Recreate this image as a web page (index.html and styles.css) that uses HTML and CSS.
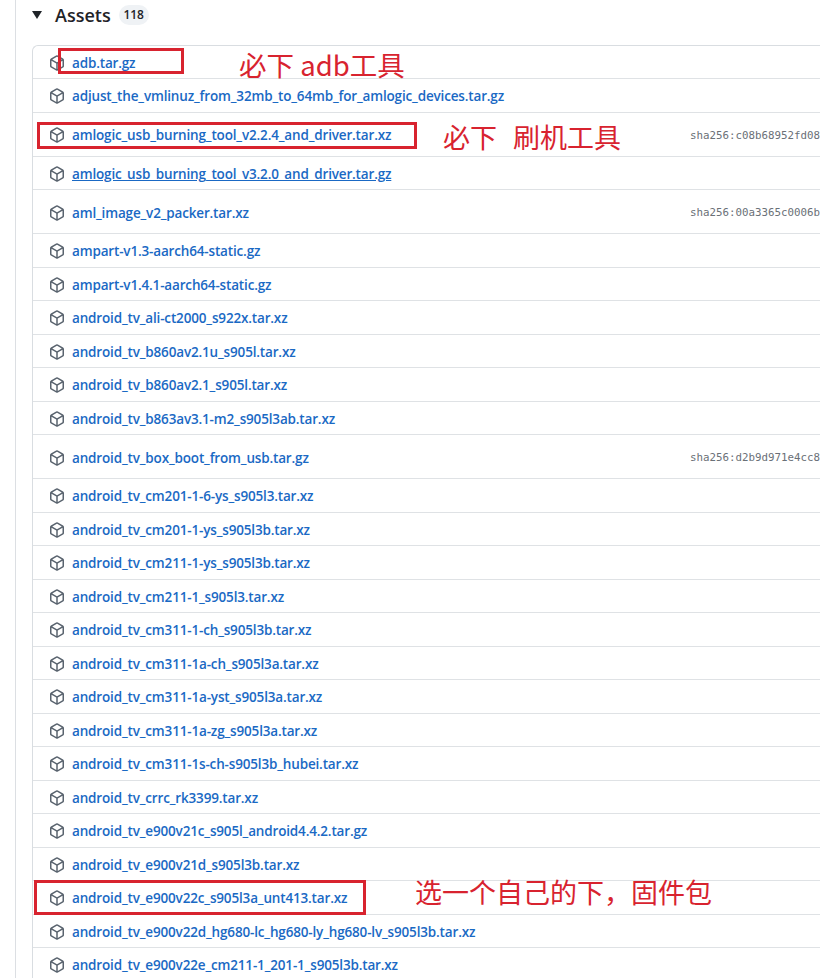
FILE: index.html
```html
<!DOCTYPE html>
<html lang="zh">
<head>
<meta charset="utf-8">
<title>Assets</title>
<link rel="stylesheet" href="styles.css">
</head>
<body>
<svg class="defs" width="0" height="0" aria-hidden="true">
  <symbol id="pkg" viewBox="0 0 16 16">
    <path d="m8.878.392 5.25 3.045c.54.314.872.89.872 1.514v6.098a1.75 1.75 0 0 1-.872 1.514l-5.25 3.045a1.75 1.75 0 0 1-1.756 0l-5.25-3.045A1.75 1.75 0 0 1 1 11.049V4.951c0-.624.332-1.201.872-1.514L7.122.392a1.75 1.75 0 0 1 1.756 0ZM7.875 1.69l-4.63 2.685L8 7.133l4.755-2.758-4.63-2.685a.248.248 0 0 0-.25 0ZM2.5 5.677v5.372c0 .09.047.171.125.216l4.625 2.683V8.432Zm6.25 8.271 4.625-2.683a.25.25 0 0 0 .125-.216V5.677L8.75 8.432Z"/>
  </symbol>
</svg>
<div class="page">
  <main class="release">
    <div class="summary">
      <span class="caret"></span>
      <h2 class="title">Assets</h2>
      <span class="count">118</span>
    </div>
    <ul class="assets">
      <li class="row"><svg class="icon"><use href="#pkg"/></svg><a class="link">adb.tar.gz</a></li>
      <li class="row"><svg class="icon"><use href="#pkg"/></svg><a class="link">adjust_the_vmlinuz_from_32mb_to_64mb_for_amlogic_devices.tar.gz</a></li>
      <li class="row tall"><svg class="icon"><use href="#pkg"/></svg><a class="link">amlogic_usb_burning_tool_v2.2.4_and_driver.tar.xz</a><code class="sha">sha256:c08b68952fd08</code></li>
      <li class="row"><svg class="icon"><use href="#pkg"/></svg><a class="link hovered">amlogic_usb_burning_tool_v3.2.0_and_driver.tar.gz</a></li>
      <li class="row tall"><svg class="icon"><use href="#pkg"/></svg><a class="link">aml_image_v2_packer.tar.xz</a><code class="sha">sha256:00a3365c0006b</code></li>
      <li class="row"><svg class="icon"><use href="#pkg"/></svg><a class="link">ampart-v1.3-aarch64-static.gz</a></li>
      <li class="row"><svg class="icon"><use href="#pkg"/></svg><a class="link">ampart-v1.4.1-aarch64-static.gz</a></li>
      <li class="row"><svg class="icon"><use href="#pkg"/></svg><a class="link">android_tv_ali-ct2000_s922x.tar.xz</a></li>
      <li class="row"><svg class="icon"><use href="#pkg"/></svg><a class="link">android_tv_b860av2.1u_s905l.tar.xz</a></li>
      <li class="row"><svg class="icon"><use href="#pkg"/></svg><a class="link">android_tv_b860av2.1_s905l.tar.xz</a></li>
      <li class="row"><svg class="icon"><use href="#pkg"/></svg><a class="link">android_tv_b863av3.1-m2_s905l3ab.tar.xz</a></li>
      <li class="row tall"><svg class="icon"><use href="#pkg"/></svg><a class="link">android_tv_box_boot_from_usb.tar.gz</a><code class="sha">sha256:d2b9d971e4cc8</code></li>
      <li class="row"><svg class="icon"><use href="#pkg"/></svg><a class="link">android_tv_cm201-1-6-ys_s905l3.tar.xz</a></li>
      <li class="row"><svg class="icon"><use href="#pkg"/></svg><a class="link">android_tv_cm201-1-ys_s905l3b.tar.xz</a></li>
      <li class="row"><svg class="icon"><use href="#pkg"/></svg><a class="link">android_tv_cm211-1-ys_s905l3b.tar.xz</a></li>
      <li class="row"><svg class="icon"><use href="#pkg"/></svg><a class="link">android_tv_cm211-1_s905l3.tar.xz</a></li>
      <li class="row"><svg class="icon"><use href="#pkg"/></svg><a class="link">android_tv_cm311-1-ch_s905l3b.tar.xz</a></li>
      <li class="row"><svg class="icon"><use href="#pkg"/></svg><a class="link">android_tv_cm311-1a-ch_s905l3a.tar.xz</a></li>
      <li class="row"><svg class="icon"><use href="#pkg"/></svg><a class="link">android_tv_cm311-1a-yst_s905l3a.tar.xz</a></li>
      <li class="row"><svg class="icon"><use href="#pkg"/></svg><a class="link">android_tv_cm311-1a-zg_s905l3a.tar.xz</a></li>
      <li class="row"><svg class="icon"><use href="#pkg"/></svg><a class="link">android_tv_cm311-1s-ch-s905l3b_hubei.tar.xz</a></li>
      <li class="row"><svg class="icon"><use href="#pkg"/></svg><a class="link">android_tv_crrc_rk3399.tar.xz</a></li>
      <li class="row"><svg class="icon"><use href="#pkg"/></svg><a class="link">android_tv_e900v21c_s905l_android4.4.2.tar.gz</a></li>
      <li class="row"><svg class="icon"><use href="#pkg"/></svg><a class="link">android_tv_e900v21d_s905l3b.tar.xz</a></li>
      <li class="row"><svg class="icon"><use href="#pkg"/></svg><a class="link">android_tv_e900v22c_s905l3a_unt413.tar.xz</a></li>
      <li class="row"><svg class="icon"><use href="#pkg"/></svg><a class="link">android_tv_e900v22d_hg680-lc_hg680-ly_hg680-lv_s905l3b.tar.xz</a></li>
      <li class="row"><svg class="icon"><use href="#pkg"/></svg><a class="link">android_tv_e900v22e_cm211-1_201-1_s905l3b.tar.xz</a></li>
    </ul>
  </main>
  <div class="mark mark-adb"></div>
  <div class="mark mark-tool"></div>
  <div class="mark mark-fw"></div>
  <div class="note note-adb">必下 adb工具</div>
  <div class="note note-tool">必下&nbsp;&nbsp;刷机工具</div>
  <div class="note note-fw">选一个自己的下&#xFF0C;固件包</div>
</div>
</body>
</html>
```

FILE: styles.css
```css
* {
  box-sizing: border-box;
}

html,
body {
  margin: 0;
  padding: 0;
  background: #ffffff;
}

.defs {
  position: absolute;
}

.page {
  position: relative;
  width: 820px;
  height: 978px;
  overflow: hidden;
  font-family: "Open Sans", "Noto Sans", "Liberation Sans", sans-serif;
}

.release {
  margin-left: 15px;
  height: 978px;
  border-left: 1px solid #dcdfe3;
  padding-left: 16px;
}

.summary {
  display: flex;
  align-items: center;
  height: 45px;
  padding-bottom: 15px;
}

.caret {
  width: 0;
  height: 0;
  margin-right: 13px;
  border-left: 5px solid transparent;
  border-right: 5px solid transparent;
  border-top: 8px solid #1f2328;
}

.title {
  margin: 0 8px 0 0;
  font-size: 18px;
  line-height: 30px;
  font-weight: 600;
  color: #1f2328;
}

.count {
  width: 30px;
  height: 20px;
  border-radius: 10px;
  background: #eff2f5;
  color: #1f2328;
  font-size: 12px;
  line-height: 20px;
  font-weight: 600;
  text-align: center;
}

.assets {
  list-style: none;
  margin: 0;
  padding: 0;
  width: 820px;
  border-left: 1px solid #d9dde1;
  border-top: 1px solid #d9dde1;
  border-top-left-radius: 6px;
}

.row {
  display: flex;
  align-items: center;
  height: 33.5px;
  padding: 2px 0 0 16px;
  border-bottom: 1px solid #dfe2e5;
  white-space: nowrap;
}

.row:first-child {
  height: 33px;
}

.tall {
  height: 44px;
}

.icon {
  width: 16px;
  height: 16px;
  margin-right: 7px;
  flex: none;
  fill: #59636e;
}

.link {
  font-size: 13.5px;
  font-weight: 550;
  letter-spacing: -0.16px;
  color: #1a69c4;
}

.hovered {
  text-decoration: underline;
}

.sha {
  position: absolute;
  left: 690px;
  font-family: "DejaVu Sans Mono", "Liberation Mono", monospace;
  font-size: 10.8px;
  color: #6a7077;
}

.mark {
  position: absolute;
  border: 3px solid #d8232f;
}

.mark-adb {
  left: 58px;
  top: 48px;
  width: 126px;
  height: 26px;
}

.mark-tool {
  left: 37px;
  top: 122px;
  width: 380px;
  height: 27px;
}

.mark-fw {
  left: 34px;
  top: 880px;
  width: 332px;
  height: 35px;
}

.note {
  position: absolute;
  font-family: "Noto Sans CJK SC", "Noto Sans", sans-serif;
  font-size: 27px;
  line-height: 36px;
  color: #d8232f;
  white-space: nowrap;
}

.note-adb {
  left: 239px;
  top: 46px;
  font-size: 27.5px;
}

.note-tool {
  left: 443px;
  top: 119px;
  word-spacing: 2px;
}

.note-fw {
  left: 415px;
  top: 874px;
}
```
